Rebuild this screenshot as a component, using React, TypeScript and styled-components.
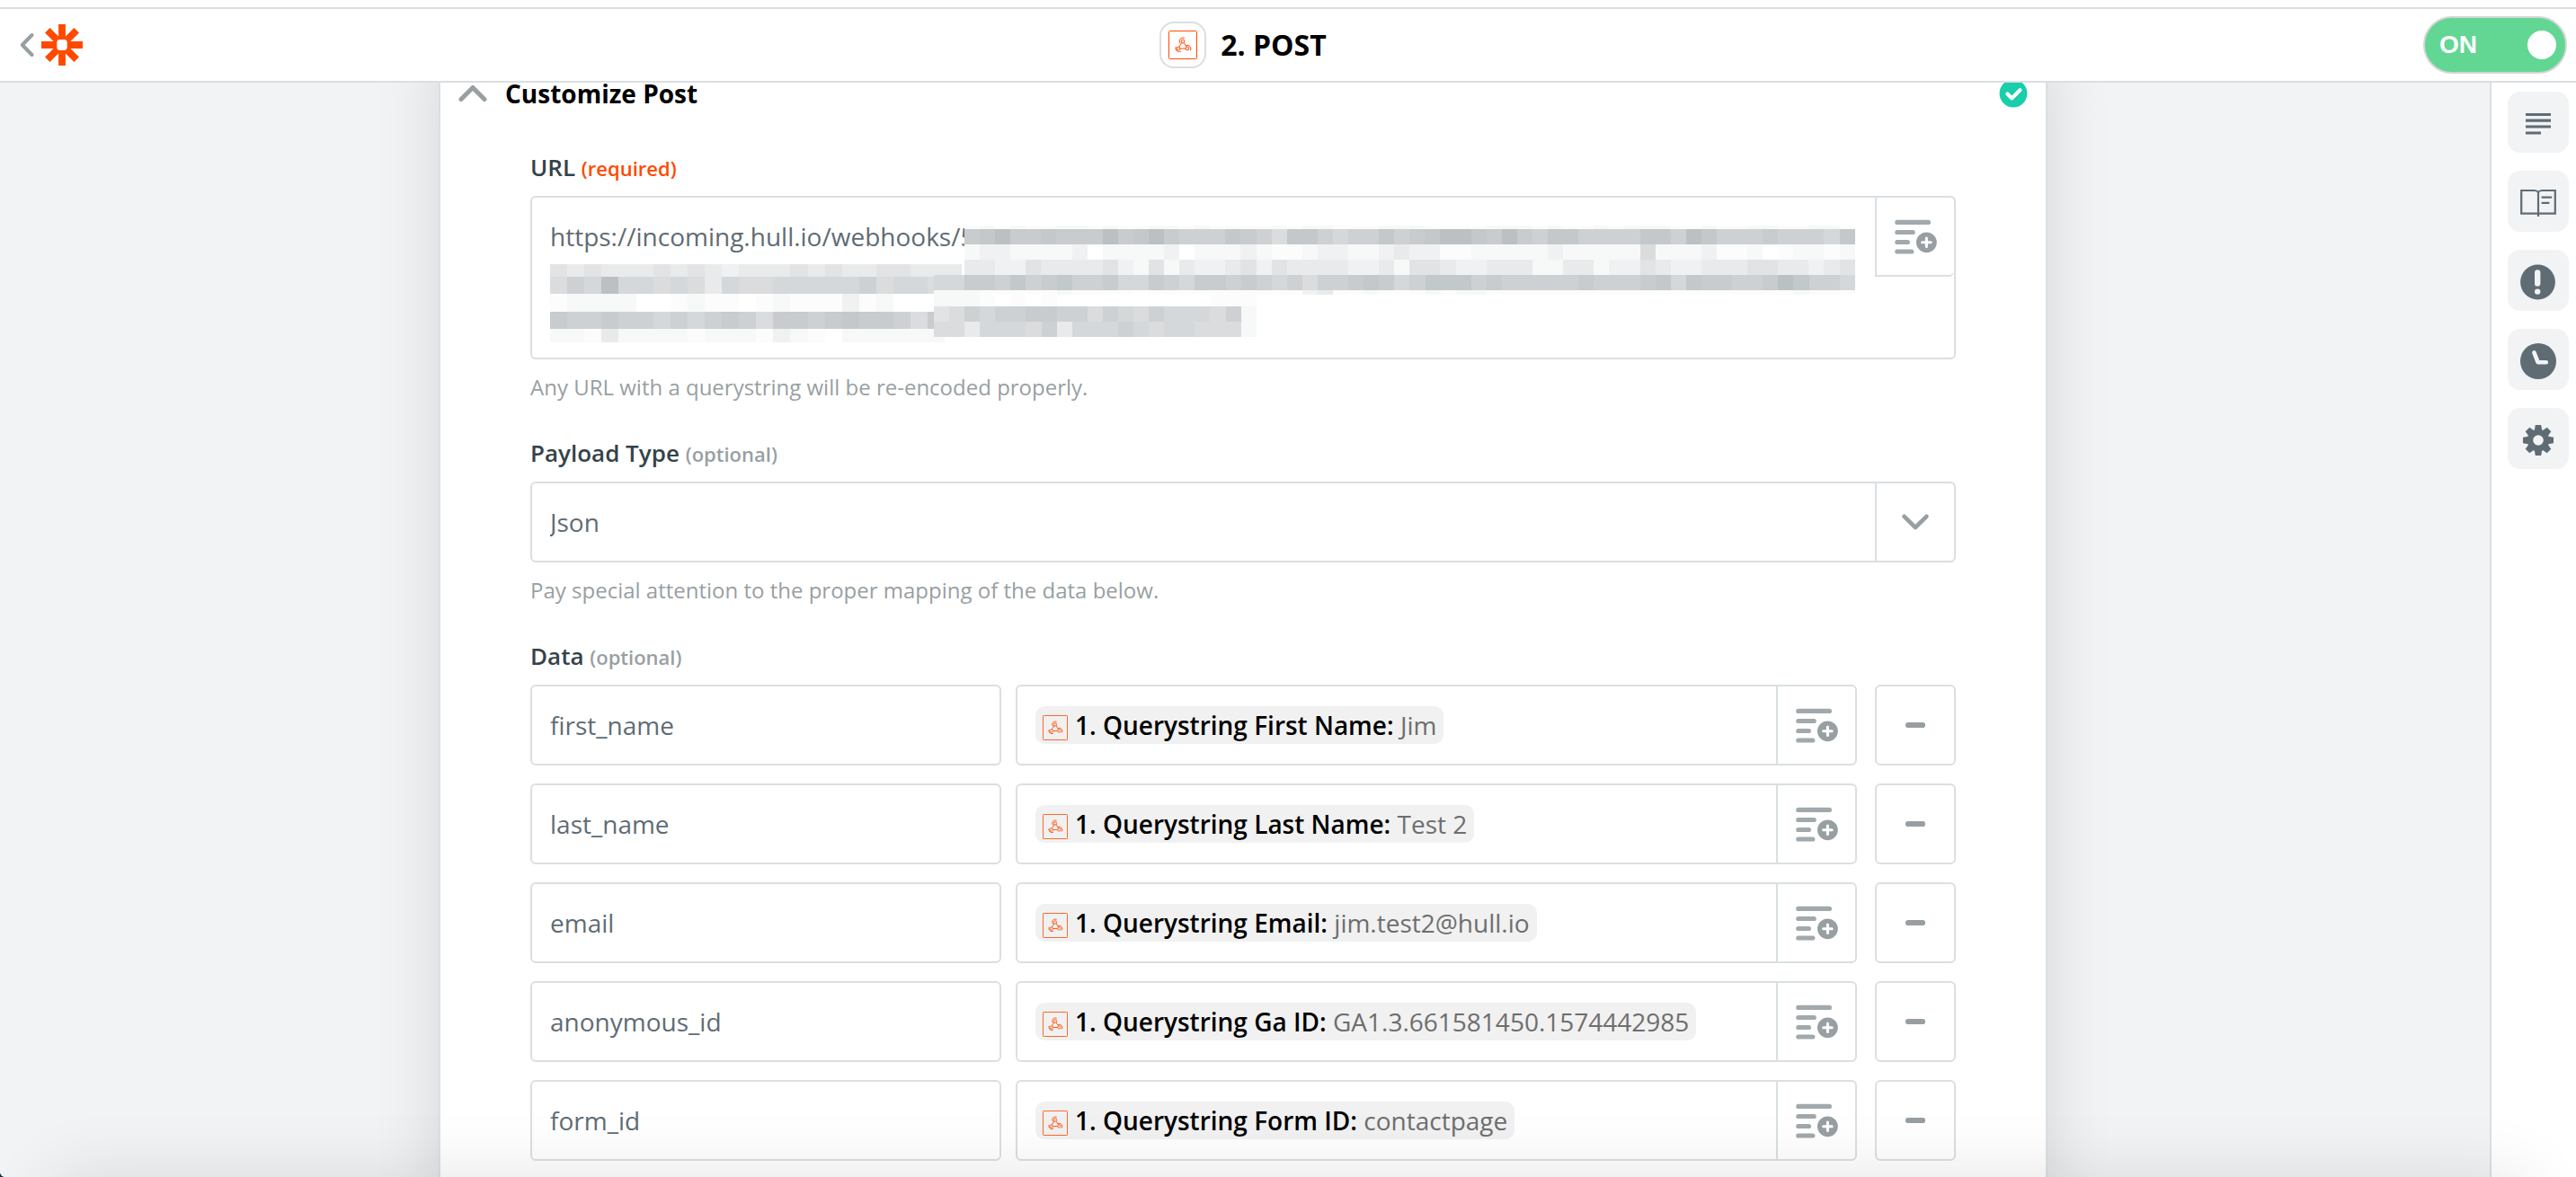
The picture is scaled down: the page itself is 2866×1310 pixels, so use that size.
import React from 'react';
import styled, { createGlobalStyle, css } from 'styled-components';

const color = {
  line: '#dadfe2',
  text: '#5f6c74',
  label: '#354249',
  muted: '#989fa3',
  bars: '#a2a9ad',
  orange: '#ff4a00',
  green: '#62d693',
  teal: '#19ceab',
  canvas: '#f2f3f5',
};

const GlobalStyle = createGlobalStyle`
  * { box-sizing: border-box; }
  body { margin: 0; background: #12324a; }
  body, button, input, textarea, select {
    font-family: 'Open Sans', 'Noto Sans', sans-serif;
  }
  button { padding: 0; border: 0; background: none; cursor: pointer; }
  svg { display: block; flex: none; }
`;

const Page = styled.div`
  display: flex;
  flex-direction: column;
  position: relative;
  height: 100vh;
  padding-top: 8px;
  overflow: hidden;
  background: #fff;
  border-bottom-left-radius: 6px;
`;

const Header = styled.header`
  display: flex;
  align-items: center;
  flex: none;
  height: 84px;
  padding: 0 10px 0 22px;
  border: solid ${color.line};
  border-width: 2px 0;
  background: #fff;
`;

const BackButton = styled.button`
  display: flex;
  align-items: center;
  gap: 8px;
`;

const StepTitle = styled.div`
  display: flex;
  flex: 1;
  align-items: center;
  justify-content: center;
  gap: 16px;
  margin-right: 22px;
`;

const AppBadge = styled.span`
  display: grid;
  place-items: center;
  width: 52px;
  height: 52px;
  border: 2px solid ${color.line};
  border-radius: 16px;
`;

const Heading = styled.h1`
  margin: 0;
  font-size: 32px;
  font-weight: 700;
  line-height: 40px;
  color: #000;
`;

const Toggle = styled.button`
  display: flex;
  align-items: center;
  justify-content: space-between;
  width: 160px;
  height: 64px;
  padding: 0 10px 0 16px;
  border: 2px solid #d5d5d5;
  border-radius: 32px;
  background: ${color.green};
  color: #fff;
  font: 700 28px 'Liberation Sans', sans-serif;
`;

const Knob = styled.span`
  width: 32px;
  height: 32px;
  border-radius: 50%;
  background: #fff;
`;

const Body = styled.div`
  display: flex;
  flex: 1;
  min-height: 0;
`;

const Scroller = styled.main`
  flex: 1;
  overflow: hidden;
  padding: 0 4px 0 0;
  background: ${color.canvas};
`;

const Card = styled.section`
  max-width: 1790px;
  margin: -30px auto 0;
  padding-bottom: 60px;
  border: solid ${color.line};
  border-width: 0 2px;
  background: #fff;
  box-shadow: 0 0 68px rgba(0, 0, 0, 0.12);
`;

const SectionHeader = styled.div`
  display: flex;
  align-items: center;
  justify-content: space-between;
  height: 84px;
  padding: 0 20px;
`;

const SectionButton = styled.button`
  display: flex;
  align-items: center;
  gap: 20px;
  font-size: 28px;
  font-weight: 700;
  line-height: 24px;
  color: #000;
`;

const Form = styled.form`
  display: flex;
  flex-direction: column;
  gap: 38px;
  padding: 22px 100px 0;
`;

const Field = styled.div`
  display: flex;
  flex-direction: column;
  gap: 14px;
`;

const labelText = css`
  font-size: 26px;
  font-weight: 600;
  line-height: 36px;
  color: ${color.label};
`;

const Label = styled.label`
  ${labelText}
`;

const GroupLabel = styled.div`
  ${labelText}
`;

const Hint = styled.span<{ $required?: boolean }>`
  font-size: 22px;
  line-height: 22px;
  color: ${(p) => (p.$required ? color.orange : color.muted)};
`;

const Help = styled.p`
  margin: 0;
  font-size: 24px;
  line-height: 34px;
  color: ${color.muted};
`;

const frame = css`
  border: 2px solid ${color.line};
  border-radius: 6px;
  background: #fff;
`;

const controlText = css`
  font-size: 28px;
  line-height: 46px;
  color: ${color.text};
`;

const Frame = styled.div`
  ${frame}
  position: relative;
  display: flex;
`;

const UrlInput = styled.textarea`
  ${controlText}
  display: block;
  flex: 1;
  padding: 20px 108px 20px 20px;
  border: 0;
  background: none;
  resize: none;
  overflow: hidden;
`;

const Mask = styled.svg`
  position: absolute;
  left: 20px;
  top: 30px;
`;

const CornerButton = styled.button`
  position: absolute;
  top: 0;
  right: 0;
  display: grid;
  place-items: center;
  width: 88px;
  height: 88px;
  border: solid ${color.line};
  border-width: 0 0 2px 2px;
  border-bottom-right-radius: 6px;
`;

const Select = styled.select`
  ${controlText}
  flex: 1;
  height: 86px;
  padding: 0 108px 0 20px;
  border: 0;
  background: none;
  appearance: none;
`;

const SelectArrow = styled.span`
  position: absolute;
  top: 0;
  bottom: 0;
  right: 0;
  display: grid;
  place-items: center;
  width: 88px;
  border-left: 2px solid ${color.line};
  pointer-events: none;
`;

const Rows = styled.div`
  display: flex;
  flex-direction: column;
  gap: 20px;
`;

const Row = styled.div`
  display: grid;
  grid-template-columns: minmax(0, 540fr) minmax(0, 956fr) 90px;
  height: 90px;
`;

const KeyInput = styled.input`
  ${frame}
  ${controlText}
  min-width: 0;
  margin-right: 16px;
  padding: 0 20px;
`;

const ValueFrame = styled(Frame)`
  margin-right: 20px;
`;

const ValueBox = styled.div`
  display: flex;
  flex: 1;
  align-items: center;
  min-width: 0;
  padding: 0 20px;
`;

const Pill = styled.span`
  display: flex;
  align-items: center;
  gap: 8px;
  height: 42px;
  padding: 0 8px;
  border-radius: 10px;
  background: #f1f1f1;
  font-size: 28px;
  line-height: 42px;
  color: #6e6e6e;
  white-space: nowrap;
`;

const PillIcon = styled.span`
  align-self: flex-end;
  padding-bottom: 4px;
`;

const PillName = styled.span`
  font-weight: 600;
  color: #000;
`;

const InsertButton = styled.button`
  display: grid;
  place-items: center;
  width: 88px;
  border-left: 2px solid ${color.line};
`;

const RemoveButton = styled.button`
  ${frame}
  display: grid;
  place-items: center;
`;

const Sidebar = styled.nav`
  display: flex;
  flex-direction: column;
  align-items: center;
  gap: 20px;
  width: 96px;
  padding: 10px 8px 0 18px;
  border-left: 2px solid ${color.line};
  background: #fff;
`;

const SideButton = styled.button`
  display: grid;
  place-items: center;
  width: 68px;
  height: 68px;
  padding-top: 3px;
  border-radius: 14px;
  background: ${color.canvas};
  color: #5f6c74;
`;

const BottomShade = styled.div`
  position: absolute;
  left: 58px;
  right: 58px;
  top: 100%;
  height: 100px;
  box-shadow: 0 0 80px rgba(0, 0, 0, 0.11);
  pointer-events: none;
`;

/* ---------- icons ---------- */

const WebhookIcon = ({ size }: { size: number }) => (
  <svg width={size} height={size} viewBox="0 0 32 32" fill="none" stroke={color.orange} strokeWidth="1">
    <rect x="0.5" y="0.5" width="31" height="31" rx="1" />
    <circle cx="16" cy="12" r="1.9" />
    <circle cx="11" cy="20" r="1.9" />
    <circle cx="21" cy="20" r="1.9" />
    <path d="M14.8 13.6l-3 4.6M17.2 13.6l3 4.6M13 20h6" />
    <path d="M13 14.2a3.9 3.9 0 0 1 4.9-5.8M8.2 18.2a3.9 3.9 0 0 0 5.6 4.8M19.6 16.6a3.9 3.9 0 0 1 4.8 5.6" />
  </svg>
);

const ZapierLogo = () => (
  <svg width="46" height="46" viewBox="0 0 46 46">
    <path
      d="M23 0v46M0 23h46M6.8 6.8l32.4 32.4M39.2 6.8L6.8 39.2"
      stroke={color.orange}
      strokeWidth="7.8"
    />
    <rect x="17.3" y="17" width="11.4" height="12" rx="3.4" fill="#fff" />
  </svg>
);

const ChevronLeft = () => (
  <svg width="16" height="28" viewBox="0 0 16 28" fill="none" stroke={color.muted} strokeWidth="4" strokeLinecap="round" strokeLinejoin="round">
    <path d="M13.5 3L2.8 14l10.7 11" />
  </svg>
);

const ChevronUp = () => (
  <svg width="32" height="20" viewBox="0 0 32 20" fill="none" stroke={color.muted} strokeWidth="5" strokeLinecap="round" strokeLinejoin="round">
    <path d="M3 16.5L16 3.5l13 13" />
  </svg>
);

const ChevronDown = () => (
  <svg width="30" height="18" viewBox="0 0 30 18" fill="none" stroke={color.muted} strokeWidth="4.6" strokeLinecap="round" strokeLinejoin="round">
    <path d="M2.6 2.8L15 15L27.4 2.8" />
  </svg>
);

const CheckIcon = () => (
  <svg width="32" height="32" viewBox="0 0 32 32" fill="none">
    <circle cx="16" cy="16" r="15.4" fill={color.teal} />
    <path d="M9.4 16.6l5 4.8 9-9.2" stroke="#fff" strokeWidth="4.2" strokeLinecap="round" strokeLinejoin="round" />
  </svg>
);

const InsertIcon = () => (
  <svg width="50" height="40" viewBox="0 0 50 40" fill="none" strokeLinecap="round">
    <path d="M4.8 4.4h34.6M4.8 15.5h17.4M4.8 26.5h11.6M4.8 37h16" stroke={color.bars} strokeWidth="5.2" />
    <circle cx="37.4" cy="26.8" r="11.4" fill={color.muted} />
    <path d="M37.4 22v9.6M32.6 26.8h9.6" stroke="#fff" strokeWidth="3" />
  </svg>
);

const MinusIcon = () => (
  <svg width="22" height="6" viewBox="0 0 22 6">
    <rect width="22" height="6" rx="2.8" fill={color.muted} />
  </svg>
);

const NotesIcon = () => (
  <svg width="28" height="26" viewBox="0 0 28 26" stroke="currentColor" strokeWidth="3.2">
    <path d="M0 2.5h28M0 9.2h28M0 16h28M0 23h17" />
  </svg>
);

const BookIcon = () => (
  <svg width="40" height="32" viewBox="0 0 40 32" fill="none" stroke="currentColor" strokeWidth="2.2">
    <path d="M20 4C19 2.4 17.4 2 15.6 2H1.2v25.6h37.6V2H24.4C22.6 2 21 2.4 20 4v27" />
    <path d="M23.6 9.6h11.6M23.6 15.8h8.8" />
  </svg>
);

const AlertIcon = () => (
  <svg width="40" height="40" viewBox="0 0 40 40">
    <circle cx="19.5" cy="20" r="19.4" fill="currentColor" />
    <path d="M19.2 9.4v12" stroke="#f2f3f5" strokeWidth="6.4" strokeLinecap="round" />
    <circle cx="19.2" cy="30.6" r="3.2" fill="#f2f3f5" />
  </svg>
);

const ClockIcon = () => (
  <svg width="40" height="40" viewBox="0 0 40 40">
    <circle cx="20" cy="20" r="20" fill="currentColor" />
    <path d="M15.4 10.4l4.2 10.8h9.2" fill="none" stroke="#f2f3f5" strokeWidth="4.6" strokeLinecap="round" strokeLinejoin="round" />
  </svg>
);

const GearIcon = () => (
  <svg width="34" height="34" viewBox="-17 -17 34 34">
    <g fill="currentColor">
      {[0, 45, 90, 135, 180, 225, 270, 315].map((a) => (
        <path key={a} d="M-4.4 -10L-3.2 -17H3.2L4.4 -10Z" transform={`rotate(${a})`} />
      ))}
    </g>
    <circle r="9" fill="none" stroke="currentColor" strokeWidth="6.4" />
  </svg>
);

/* ---------- masked part of the webhook address ---------- */

const shades: Record<string, string> = {
  '0': '#ffffff', '1': '#fcfcfc', '2': '#f7f8f8', '3': '#f0f1f2', '4': '#e9eaeb', '5': '#e2e3e5',
  '6': '#dadcde', '7': '#d4d8da', '8': '#cdd1d3', '9': '#c8cccf', a: '#c3c8ca', b: '#bbc1c3',
};

type Strip = { x: number; y: number; w: number; h: number; cells: string };

const strips: Strip[] = [
  { x: 0, y: 44, w: 19.1, h: 14, cells: '545444545434445454455444' },
  { x: 0, y: 58, w: 19.1, h: 19, cells: '687b7767647667777786776' },
  { x: 0, y: 77, w: 19.1, h: 20, cells: '12222001211012111312000' },
  { x: 0, y: 97, w: 19.1, h: 19, cells: '98898878789869989a99869' },
  { x: 0, y: 116, w: 19.1, h: 15, cells: '22142222122213210222222' },
  { x: 461, y: 1, w: 17.08, h: 4, cells: '1212112212112212111121221112221111222121121222112112211221' },
  { x: 461, y: 5, w: 17.08, h: 17, cells: '9ab99a999b9ab9888a986aa8788a89abba9b98aa8888aa8ba88898887a' },
  { x: 461, y: 22, w: 17.08, h: 17, cells: '2332222302222302223211233223433112222232222262223112012212' },
  { x: 461, y: 39, w: 17.08, h: 17, cells: '4433544445325243345354444334255433444224423354334445544345' },
  { x: 427, y: 56, w: 17.08, h: 17, cells: '77998a89a8897798799898786889a978aaa898888898889a7a99889ba88788a7' .slice(0, 60) },
  { x: 427, y: 73, w: 17.08, h: 5, cells: '222111112111101111111111341121112122111111111111111111112111' },
  { x: 427, y: 78, w: 17.08, h: 13, cells: '222101010000000000111' },
  { x: 427, y: 91, w: 17.08, h: 17, cells: '568788998868768777682' },
  { x: 427, y: 108, w: 17.08, h: 17, cells: '664777684777876776662' },
];

const MaskedToken = () => (
  <Mask width="1454" height="132" viewBox="0 0 1454 132" shapeRendering="crispEdges" aria-hidden="true">
    {strips.map((s) =>
      [...s.cells].map((c, i) => (
        <rect key={`${s.x}-${s.y}-${i}`} x={s.x + i * s.w} y={s.y} width={s.w} height={s.h} fill={shades[c]} />
      )),
    )}
  </Mask>
);

/* ---------- page ---------- */

const data = [
  { key: 'first_name', name: '1. Querystring First Name:', value: 'Jim' },
  { key: 'last_name', name: '1. Querystring Last Name:', value: 'Test 2' },
  { key: 'email', name: '1. Querystring Email:', value: 'jim.test2@hull.io' },
  { key: 'anonymous_id', name: '1. Querystring Ga ID:', value: 'GA1.3.661581450.1574442985' },
  { key: 'form_id', name: '1. Querystring Form ID:', value: 'contactpage' },
];

const tools = [
  { name: 'Outline', Icon: NotesIcon },
  { name: 'Help', Icon: BookIcon },
  { name: 'Alerts', Icon: AlertIcon },
  { name: 'History', Icon: ClockIcon },
  { name: 'Settings', Icon: GearIcon },
];

export default function App() {
  const [on, setOn] = React.useState(true);
  return (
    <Page>
      <GlobalStyle />
      <Header>
        <BackButton type="button" aria-label="Back to Zaps">
          <ChevronLeft />
          <ZapierLogo />
        </BackButton>
        <StepTitle>
          <AppBadge>
            <WebhookIcon size={32} />
          </AppBadge>
          <Heading>2. POST</Heading>
        </StepTitle>
        <Toggle type="button" role="switch" aria-checked={on} onClick={() => setOn(!on)}>
          {on ? 'ON' : 'OFF'}
          <Knob />
        </Toggle>
      </Header>
      <Body>
        <Scroller>
          <Card>
            <SectionHeader>
              <SectionButton type="button" aria-expanded="true">
                <ChevronUp />
                Customize Post
              </SectionButton>
              <CheckIcon />
            </SectionHeader>
            <Form>
              <Field>
                <Label htmlFor="url">
                  URL <Hint $required>(required)</Hint>
                </Label>
                <Frame>
                  <UrlInput id="url" rows={3} spellCheck={false} defaultValue="https://incoming.hull.io/webhooks/5" />
                  <MaskedToken />
                  <CornerButton type="button" aria-label="Insert a field">
                    <InsertIcon />
                  </CornerButton>
                </Frame>
                <Help>Any URL with a querystring will be re-encoded properly.</Help>
              </Field>
              <Field>
                <Label htmlFor="payload">
                  Payload Type <Hint>(optional)</Hint>
                </Label>
                <Frame>
                  <Select id="payload" defaultValue="json">
                    <option value="json">Json</option>
                  </Select>
                  <SelectArrow>
                    <ChevronDown />
                  </SelectArrow>
                </Frame>
                <Help>Pay special attention to the proper mapping of the data below.</Help>
              </Field>
              <Field role="group" aria-labelledby="data-label">
                <GroupLabel id="data-label">
                  Data <Hint>(optional)</Hint>
                </GroupLabel>
                <Rows>
                  {data.map((d) => (
                    <Row key={d.key}>
                      <KeyInput aria-label="Key" defaultValue={d.key} />
                      <ValueFrame>
                        <ValueBox role="textbox" tabIndex={0} aria-label={`Value of ${d.key}`}>
                          <Pill>
                            <PillIcon>
                              <WebhookIcon size={28} />
                            </PillIcon>
                            <span>
                              <PillName>{d.name}</PillName> {d.value}
                            </span>
                          </Pill>
                        </ValueBox>
                        <InsertButton type="button" aria-label="Insert a field">
                          <InsertIcon />
                        </InsertButton>
                      </ValueFrame>
                      <RemoveButton type="button" aria-label={`Remove ${d.key}`}>
                        <MinusIcon />
                      </RemoveButton>
                    </Row>
                  ))}
                </Rows>
              </Field>
            </Form>
          </Card>
        </Scroller>
        <Sidebar>
          {tools.map(({ name, Icon }) => (
            <SideButton key={name} type="button" aria-label={name}>
              <Icon />
            </SideButton>
          ))}
        </Sidebar>
      </Body>
      <BottomShade />
    </Page>
  );
}
